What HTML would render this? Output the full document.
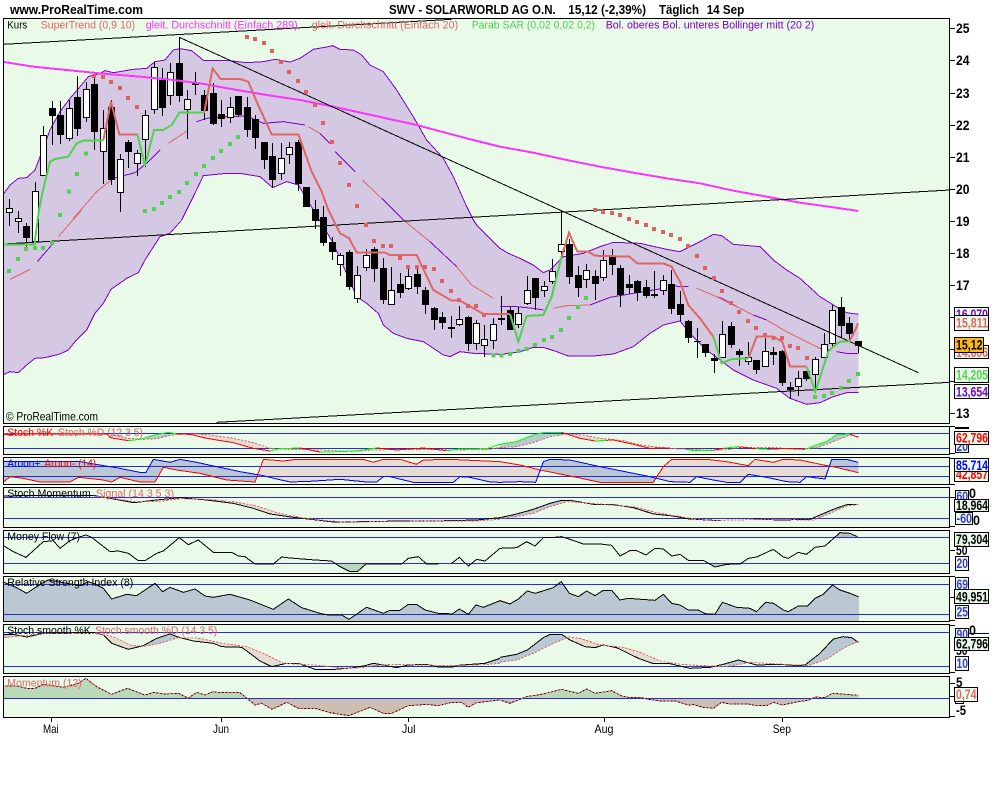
<!DOCTYPE html>
<html>
<head>
<meta charset="utf-8">
<title>SWV - SOLARWORLD AG O.N.</title>
<style>
html,body{margin:0;padding:0;background:#fff;width:1000px;height:800px;overflow:hidden}
svg{position:absolute;left:0;top:0;display:block}
text{font-family:"Liberation Sans",Arial,sans-serif}
.t{font-size:12.5px;font-weight:bold;fill:#000}
.l{font-size:11px}
.a{font-size:13.5px;font-weight:bold;fill:#000}
.v{font-size:13.5px;font-weight:bold}
.m{font-size:12px;fill:#000}
.f{fill:#e9fae9;stroke:#000;stroke-width:1}
.b{fill:#e9fae9;stroke:#000;stroke-width:1}
.sr{fill:none;stroke:#e06666;stroke-width:6}
.sg{fill:none;stroke:#4fd24f;stroke-width:6}
.k{fill:none;stroke:#000;stroke-width:3}
.rd{fill:none;stroke:#f00;stroke-width:3}
.gn{fill:none;stroke:#0f0;stroke-width:3}
.bl{fill:none;stroke:#00f;stroke-width:3}
.ds{fill:none;stroke:#e06666;stroke-width:3;stroke-dasharray:7 4}
.pu{fill:none;stroke:#7f00cc;stroke-width:3}
.tn{fill:#e6dcd2}
.gy{fill:#b9c8d3}
</style>
</head>
<body>
<svg width="1000" height="800" viewBox="0 0 1000 800" xmlns="http://www.w3.org/2000/svg">
<defs>
<clipPath id="up"><rect x="0" y="300" width="1500" height="70"/></clipPath>
<clipPath id="dn"><rect x="0" y="370" width="1500" height="60"/></clipPath>
<clipPath id="main"><rect x="4" y="19" width="945" height="404"/></clipPath>
</defs>

<!-- titles -->
<text class="t" x="10" y="14" textLength="133" lengthAdjust="spacingAndGlyphs">www.ProRealTime.com</text>
<text class="t" x="389" y="14" textLength="166.7" lengthAdjust="spacingAndGlyphs">SWV - SOLARWORLD AG O.N.</text>
<text class="t" x="568.3" y="14" textLength="77.7" lengthAdjust="spacingAndGlyphs">15,12 (-2,39%)</text>
<text class="t" x="659" y="14" textLength="40" lengthAdjust="spacingAndGlyphs">Täglich</text>
<text class="t" x="706.7" y="14" textLength="37.6" lengthAdjust="spacingAndGlyphs">14 Sep</text>

<!-- panels -->
<rect class="f" x="3.5" y="18.5" width="946" height="405"/>
<rect class="f" x="3.5" y="426.5" width="946" height="28"/>
<rect class="f" x="3.5" y="457.5" width="946" height="27"/>
<rect class="f" x="3.5" y="487.5" width="946" height="40"/>
<rect class="f" x="3.5" y="530.5" width="946" height="43"/>
<rect class="f" x="3.5" y="576.5" width="946" height="45"/>
<rect class="f" x="3.5" y="624.5" width="946" height="49"/>
<rect class="f" x="3.5" y="676.5" width="946" height="41"/>

<g clip-path="url(#main)" shape-rendering="crispEdges">
<!-- bollinger band -->
<g transform="scale(.33333)">
<polygon fill="#d4c8e2" points="12,580 30,555 55,535 80,533 105,510 130,445 150,390 180,335 210,295 240,260 265,230 300,220 315,212 340,218 400,208 440,205 465,185 495,180 520,150 540,146 575,152 610,181 680,181 740,188 790,185 825,178 870,186 900,175 940,148 975,142 998,137 1020,148 1060,150 1085,165 1110,195 1150,215 1190,270 1240,350 1280,420 1330,475 1360,530 1400,620 1420,660 1430,675 1490,735 1500,745 1525,760 1560,775 1600,795 1630,818 1650,810 1690,770 1750,760 1800,740 1840,727 1920,730 2000,748 2040,755 2100,725 2140,703 2165,707 2200,733 2280,740 2320,780 2360,810 2400,835 2460,890 2500,915 2540,938 2575,943 2575,1177 2540,1178 2500,1190 2460,1208 2420,1213 2370,1195 2330,1165 2260,1140 2200,1110 2160,1080 2120,1050 2070,1000 2040,963 1990,975 1950,1000 1900,1040 1840,1062 1780,1068 1705,1068 1670,1055 1630,1042 1600,1042 1560,1055 1530,1060 1500,1063 1420,1060 1380,1055 1350,1070 1330,1065 1270,1025 1220,1015 1180,1000 1150,975 1135,940 1100,910 1070,890 1000,730 940,630 895,555 860,545 818,563 780,530 720,520 680,520 610,527 580,590 545,660 540,660 510,700 480,710 435,780 415,818 380,835 333,868 310,910 285,940 260,990 225,1025 205,1050 180,1062 135,1073 105,1075 80,1095 55,1118 30,1115 12,1123"/>
<path class="pu" d="M12 580L30 555 55 535 80 533 105 510 130 445 150 390 180 335 210 295 240 260 265 230 300 220 315 212 340 218 400 208 440 205 465 185 495 180 520 150 540 146 575 152 610 181 680 181 740 188 790 185 825 178 870 186 900 175 940 148 975 142 998 137 1020 148 1060 150 1085 165 1110 195 1150 215 1190 270 1240 350 1280 420 1330 475 1360 530 1400 620 1420 660 1430 675 1490 735 1500 745 1525 760 1560 775 1600 795 1630 818 1650 810 1690 770 1750 760 1800 740 1840 727 1920 730 2000 748 2040 755 2100 725 2140 703 2165 707 2200 733 2280 740 2320 780 2360 810 2400 835 2460 890 2500 915 2540 938 2575 943"/>
<path class="pu" d="M2575 1177L2540 1178 2500 1190 2460 1208 2420 1213 2370 1195 2330 1165 2260 1140 2200 1110 2160 1080 2120 1050 2070 1000 2040 963 1990 975 1950 1000 1900 1040 1840 1062 1780 1068 1705 1068 1670 1055 1630 1042 1600 1042 1560 1055 1530 1060 1500 1063 1420 1060 1380 1055 1350 1070 1330 1065 1270 1025 1220 1015 1180 1000 1150 975 1135 940 1100 910 1070 890 1000 730 940 630 895 555 860 545 818 563 780 530 720 520 680 520 610 527 580 590 545 660 510 700 480 710 435 780 415 818 380 835 333 868 310 910 285 940 260 990 225 1025 205 1050 180 1062 135 1073 105 1075 80 1095 55 1118 30 1115 12 1123"/>
<!-- mid thin lines -->
<path class="pu" d="M220 655L260 610 290 575 340 535 405 518 440 490 480 450M505 430L565 390M590 365L620 355 680 350 740 348 790 370 850 365 915 375M925 380L960 400 990 430M1005 455L1050 500 1065 515M1087 540L1145 595 1210 660 1290 725 1370 800 1415 855 1480 895M30 838L90 808M112 785L155 735M175 710L245 630M1500 920L1550 920 1600 925 1630 930M1660 925L1700 917 1770 915 1830 892 1900 880 1990 865M2010 858L2065 860M2090 865L2150 890 2165 895 2220 925 2260 945 2300 960 2360 995 2420 1025 2460 1045 2490 1050M2510 1055L2540 1060 2575 1060"/>
<path fill="none" stroke="#e06666" stroke-width="3" d="M220 655L260 610 290 575 340 535M505 430L565 390M925 380L960 400M1087 540L1145 595M1210 660L1290 725M1370 800L1415 855 1480 895M30 838L90 808M175 710L245 630M1660 925L1700 917 1770 915M2090 865L2150 890 2220 925 2260 945M2300 960L2360 995 2420 1025 2460 1045"/>
</g>

<!-- candle wicks -->
<path stroke="#000" stroke-width="1" fill="none" d="M9.5 199V226M18.5 211V233M26.5 223V247M35.5 182V242M43.5 126V176M52.5 101V145M60.5 101V144M69.5 100V141M77.5 76V136M86.5 82V122M94.5 73V150M103.5 110V184M111.5 100V185M120.5 154V212M128.5 140V168M137.5 150V176M145.5 110V167M154.5 62V114M162.5 68V116M170.5 63V105M179.5 37V102M187.5 90V139M195.5 72V95M204.5 90V120M213.5 83V125M221.5 100V127M230.5 97V123M238.5 96V117M247.5 97V137M255.5 115V149M264.5 142V169M272.5 143V188M281.5 143V180M289.5 142V164M298.5 140V191M306.5 187V207M315.5 200V229M323.5 206V246M332.5 237V260M340.5 253V276M349.5 250V290M357.5 266V303M366.5 249V271M374.5 247V282M383.5 258V304M391.5 267V305M400.5 273V298M408.5 269V290M417.5 265V294M425.5 287V314M434.5 307V330M442.5 312V329M451.5 316V338M459.5 306V326M468.5 316V351M476.5 320V350M484.5 325V357M493.5 318V349M501.5 296V325M510.5 307V330M518.5 307V328M527.5 276V305M535.5 278V310M544.5 281V297M552.5 259V284M561.5 210V255M569.5 239V284M578.5 266V297M586.5 264V288M595.5 270V300M603.5 250V281M612.5 249V275M620.5 265V307M629.5 275V294M637.5 280V301M646.5 280V298M654.5 271V298M663.5 275V295M671.5 270V314M680.5 291V321M688.5 320V343M697.5 328V358M705.5 344V357M714.5 354V373M722.5 321V357M731.5 322V348M739.5 349V366M748.5 342V365M756.5 360V374M765.5 338V366M773.5 347V365M782.5 350V386M790.5 382V399M798.5 371V396M806.5 371V381M815.5 357V390M824.5 333V357M832.5 305V347M841.5 297V338M849.5 317V342M858.5 341V353"/>
<!-- black bodies -->
<path fill="#000" d="M23 226h7v12h-7zM49 108h7v8h-7zM57 115h7v20h-7zM74 97h7v32h-7zM91 84h7v48h-7zM108 107h7v73h-7zM125 142h7v10h-7zM159 80h7v28h-7zM176 63h7v33h-7zM192 83h7v2h-7zM201 95h7v16h-7zM210 93h7v31h-7zM218 114h7v5h-7zM235 96h7v19h-7zM244 107h7v23h-7zM252 119h7v19h-7zM261 142h7v18h-7zM269 156h7v24h-7zM295 142h7v42h-7zM303 187h7v20h-7zM312 209h7v12h-7zM320 217h7v26h-7zM329 242h7v10h-7zM346 252h7v35h-7zM371 249h7v20h-7zM380 268h7v32h-7zM397 284h7v9h-7zM414 274h7v13h-7zM422 290h7v15h-7zM431 308h7v12h-7zM439 317h7v6h-7zM448 327h7v2h-7zM465 317h7v27h-7zM498 318h7v2h-7zM507 310h7v20h-7zM532 278h7v20h-7zM566 244h7v33h-7zM575 275h7v13h-7zM592 276h7v8h-7zM609 257h7v8h-7zM617 268h7v27h-7zM626 284h7v4h-7zM634 281h7v12h-7zM643 287h7v9h-7zM651 294h7v2h-7zM668 284h7v25h-7zM677 304h7v11h-7zM685 321h7v17h-7zM694 341h7v1h-7zM702 344h7v9h-7zM711 358h7v3h-7zM728 326h7v19h-7zM736 351h7v4h-7zM753 360h7v10h-7zM770 352h7v3h-7zM779 351h7v32h-7zM787 387h7v3h-7zM803 371h7v8h-7zM838 307h7v19h-7zM846 323h7v11h-7zM855 341h7v5h-7z"/>
<!-- white bodies -->
<path fill="#fff" stroke="#000" stroke-width="1" d="M6.5 208.5h6v4h-6zM15.5 218.5h6v3h-6zM32.5 191.5h6v50h-6zM40.5 135.5h6v40h-6zM66.5 108.5h6v30h-6zM83.5 89.5h6v28h-6zM100.5 128.5h6v23h-6zM117.5 159.5h6v33h-6zM134.5 153.5h6v10h-6zM142.5 115.5h6v24h-6zM151.5 67.5h6v42h-6zM167.5 72.5h6v23h-6zM184.5 99.5h6v10h-6zM227.5 107.5h6v10h-6zM278.5 158.5h6v15h-6zM286.5 147.5h6v7h-6zM337.5 255.5h6v9h-6zM354.5 275.5h6v23h-6zM363.5 255.5h6v12h-6zM388.5 290.5h6v14h-6zM405.5 276.5h6v12h-6zM456.5 319.5h6v5h-6zM473.5 323.5h6v20h-6zM481.5 339.5h6v6h-6zM490.5 324.5h6v16h-6zM515.5 313.5h6v11h-6zM524.5 290.5h6v13h-6zM541.5 286.5h6v4h-6zM549.5 271.5h6v10h-6zM558.5 244.5h6v7h-6zM583.5 270.5h6v9h-6zM600.5 260.5h6v17h-6zM660.5 280.5h6v10h-6zM719.5 334.5h6v23h-6zM745.5 357.5h6v4h-6zM762.5 351.5h6v15h-6zM795.5 378.5h6v8h-6zM812.5 359.5h6v15h-6zM821.5 344.5h6v13h-6zM829.5 310.5h6v33h-6z"/>

<g transform="scale(.33333)">
<!-- magenta MA -->
<path fill="none" stroke="#ff33ff" stroke-width="6" d="M12 186L100 200 200 210 300 220 420 230 520 240 600 250 700 268 800 285 900 300 1000 320 1100 342 1250 375 1400 415 1500 440 1600 458 1700 480 1800 500 1900 518 2000 535 2100 550 2200 572 2300 590 2400 608 2500 622 2575 633"/>
<!-- trendlines -->
<path fill="none" stroke="#000" stroke-width="3" d="M10 133L1355 58M538 112L2755 1118M10 732L2850 570M650 1267L2850 1147"/>
<!-- supertrend -->
<path class="sr" d="M310 420L333 305 358 403 412 403M612 340L638 205 662 237 720 237 745 245 770 305 815 403 895 403 935 515 965 575 985 630 1020 700 1048 715 1070 758 1155 758 1170 765 1250 765 1300 870 1355 902 1380 902 1450 942 1530 942M1685 770L1707 698 1732 755 1765 755 1785 767 1888 770 1912 790 1990 790 2015 800 2040 845 2065 915 2100 955 2140 1010M2245 1075L2270 1010 2320 1010 2347 1025 2370 1100 2420 1100M2548 1025L2575 970"/>
<path class="sg" d="M12 733L105 733 105 720 117 630 128 575 150 485 165 477 205 470 230 430 250 422 310 422M412 403L435 497 462 390 490 390 515 375 538 338 612 338M1530 942L1555 1025 1580 948 1630 945 1655 890 1685 770M2140 1010L2165 1090 2195 1077 2245 1075M2420 1100L2446 1175 2485 1055 2500 1040 2520 1025 2548 1025"/>
<!-- SAR dots -->
<path fill="#e06060" d="M735 105h12v12h-12zM759 111h12v12h-12zM786 123h12v12h-12zM810 147h12v12h-12zM837 180h12v12h-12zM861 210h12v12h-12zM888 237h12v12h-12zM912 270h12v12h-12zM939 309h12v12h-12zM963 363h12v12h-12zM990 420h12v12h-12zM1014 483h12v12h-12zM1041 549h12v12h-12zM1065 612h12v12h-12zM1092 669h12v12h-12zM1116 717h12v12h-12zM1143 732h12v12h-12zM1167 732h12v12h-12zM1194 768h12v12h-12zM1218 795h12v12h-12zM1245 795h12v12h-12zM1269 795h12v12h-12zM1296 801h12v12h-12zM1320 837h12v12h-12zM1347 867h12v12h-12zM1371 894h12v12h-12zM1398 912h12v12h-12zM1422 912h12v12h-12zM1446 939h12v12h-12zM276 222h12v12h-12zM303 225h12v12h-12zM327 240h12v12h-12zM354 258h12v12h-12zM378 288h12v12h-12zM405 315h12v12h-12zM1779 624h12v12h-12zM1803 630h12v12h-12zM1830 633h12v12h-12zM1854 639h12v12h-12zM1881 651h12v12h-12zM1905 660h12v12h-12zM1932 669h12v12h-12zM1956 681h12v12h-12zM1983 690h12v12h-12zM2007 699h12v12h-12zM2034 711h12v12h-12zM2058 732h12v12h-12zM2085 762h12v12h-12zM2109 798h12v12h-12zM2136 828h12v12h-12zM2160 867h12v12h-12zM2187 903h12v12h-12zM2211 930h12v12h-12zM2238 957h12v12h-12zM2262 978h12v12h-12zM2289 999h12v12h-12zM2314 1008h12v12h-12zM2340 1008h12v12h-12zM2364 1032h12v12h-12zM2388 1038h12v12h-12zM2415 1068h12v12h-12z"/>
<path fill="#4fd24f" d="M174 639h12v12h-12zM201 569h12v12h-12zM225 516h12v12h-12zM252 455h12v12h-12zM21 807h12v12h-12zM48 771h12v12h-12zM72 741h12v12h-12zM99 738h12v12h-12zM123 738h12v12h-12zM150 723h12v12h-12zM429 627h12v12h-12zM456 621h12v12h-12zM480 603h12v12h-12zM504 585h12v12h-12zM531 570h12v12h-12zM555 543h12v12h-12zM582 516h12v12h-12zM606 492h12v12h-12zM633 468h12v12h-12zM657 447h12v12h-12zM684 426h12v12h-12zM708 405h12v12h-12zM1474 1061h12v12h-12zM1498 1061h12v12h-12zM1524 1056h12v12h-12zM1549 1047h12v12h-12zM1574 1041h12v12h-12zM1599 1029h12v12h-12zM1626 1014h12v12h-12zM1650 1005h12v12h-12zM1677 984h12v12h-12zM1701 948h12v12h-12zM1728 915h12v12h-12zM1752 888h12v12h-12zM2439 1185h12v12h-12zM2466 1182h12v12h-12zM2490 1173h12v12h-12zM2517 1158h12v12h-12zM2541 1137h12v12h-12zM2568 1116h12v12h-12z"/>
</g>
</g>

<!-- main legend -->
<text class="l" x="7.3" y="28.5" fill="#000" textLength="20" lengthAdjust="spacingAndGlyphs">Kurs</text>
<text class="l" x="40.7" y="28.5" fill="#e06666" textLength="94.5" lengthAdjust="spacingAndGlyphs">SuperTrend (0,9 10)</text>
<text class="l" x="145.7" y="28.5" fill="#ff33ff" textLength="152" lengthAdjust="spacingAndGlyphs">gleit. Durchschnitt (Einfach 289)</text>
<text class="l" x="311.7" y="28.5" fill="#e06666" textLength="146.5" lengthAdjust="spacingAndGlyphs">gleit. Durchschnitt (Einfach 20)</text>
<text class="l" x="471.7" y="28.5" fill="#4fd24f" textLength="123.3" lengthAdjust="spacingAndGlyphs">Parab SAR (0,02 0,02 0,2)</text>
<text class="l" x="605.7" y="28.5" fill="#7f00cc" textLength="208.6" lengthAdjust="spacingAndGlyphs">Bol. oberes Bol. unteres Bollinger mitt (20 2)</text>
<text class="m" x="6" y="420.7" textLength="92" lengthAdjust="spacingAndGlyphs">© ProRealTime.com</text>

<g shape-rendering="crispEdges">
<!-- left half subpanels 1-4 -->
<g transform="scale(.33333) translate(0,1260)">
<polygon class="tn" points="320,42 335,54 385,62 420,58 430,58 385,55 340,45"/>
<polygon class="gy" points="430,58 460,46 505,37 530,42 510,46 470,56"/>
<polygon class="tn" points="530,42 570,43 620,55 700,68 760,85 810,93 760,68 700,55 620,43 550,42"/>
<polygon class="gy" points="12,125 240,125 300,135 360,145 420,157 438,157 460,118 510,127 540,118 590,127 650,140 720,155 775,165 765,186 680,180 600,160 530,150 490,142 465,186 420,186 360,172 335,186 310,180 235,172 210,186 120,186 70,175 30,170 12,185"/>
<polygon class="tn" points="775,165 790,118 850,123 890,118 1090,118 1120,127 1150,118 1200,118 1250,133 1270,120 1350,118 1500,125 1500,187 1470,186 1410,172 1380,170 1360,187 1240,187 1170,170 1150,170 1130,186 1100,186 1020,178 930,184 870,186 830,177 790,167"/>
<polygon class="tn" points="700,245 770,258 830,278 880,292 810,282 760,265 700,250"/>
<polygon fill="#b9d9b9" points="1005,430 1020,440 1050,455 1072,455 1098,432"/>
<path stroke="#2b2bd0" stroke-width="3" d="M12 41H1500M12 86H1500M12 139H1500M12 169H1500M12 232H1500M12 295H1500M12 352H1500M12 430H1500"/>
<path class="ds" d="M12 40L300 41 340 45 385 55 430 58 470 56 510 46 550 42 620 43 700 55 760 68 810 85 860 88 900 88 1000 92 1060 94 1120 90 1200 88 1300 88 1360 90 1470 88 1500 82"/>
<path class="rd" d="M12 43L150 42 320 42 335 54 385 62M530 42L570 43 620 55 700 68 760 85 810 93M900 84L960 96M1130 84L1190 90 1270 84 1340 92"/>
<path class="gn" d="M385 62L420 58 460 46 505 37 530 42M810 93L840 86 900 84M960 96L985 96 1060 93 1090 90 1130 84M1340 92L1380 87 1460 86 1500 73"/>
<path class="rd" d="M12 185L30 170 70 175 120 186 210 186 235 172 310 180 335 186 360 172 420 186 465 186 490 142 530 150 600 160 680 180 765 186 790 118 850 123 890 118 1090 118 1120 127 1150 118 1200 118 1250 133 1270 120 1350 118 1500 125"/>
<path class="bl" d="M12 125L240 125 300 135 360 145 420 157 438 157 460 118 510 127 540 118 590 127 650 140 720 155 790 167 830 177 870 186 930 184 1020 178 1100 186 1130 186 1150 170 1170 170 1240 187 1360 187 1380 170 1410 172 1470 186 1500 187"/>
<path class="k" d="M12 228L100 226 280 226 320 233 400 248 470 240 540 233 620 240 700 250 760 265 810 282 880 292 950 300 1000 306 1100 305 1200 303 1300 303 1430 300 1500 293"/>
<path class="ds" d="M280 228L340 235 400 245 470 245 540 236 620 238 700 245 770 258 830 278 900 292 960 300 1040 307 1120 305 1300 303 1430 303 1500 298"/>
<path class="k" d="M12 378L40 395 78 412 130 365 160 362 180 385 210 362 235 352 258 345 275 352 330 395 355 393 385 400 415 422 435 422 470 400 490 393 538 353 565 374 595 360 640 397 695 397 715 408 735 410 765 432 820 432 845 411 870 414 945 420 995 423 1020 440 1050 455 1072 455 1098 432 1205 432 1225 415 1255 410 1280 432 1315 432M1355 430L1378 412 1405 438 1430 418 1455 423 1500 385"/>
</g>

<!-- right half subpanels 1-4 -->
<g transform="scale(.33333) translate(1500,1260)">
<polygon class="gy" points="0,73 50,65 100,45 130,38 185,37 200,42 150,50 100,68 50,80 0,83"/>
<polygon class="tn" points="200,42 240,55 285,63 340,60 400,73 450,85 510,84 480,82 420,75 370,62 300,55 250,45"/>
<polygon class="gy" points="920,88 940,78 980,65 1010,44 1050,42 1075,50 1050,45 1000,65 950,84"/>
<polygon class="tn" points="0,125 60,135 120,150 125,152 107,187 60,185 0,187"/>
<polygon class="gy" points="125,152 130,125 150,118 210,120 300,140 450,170 470,175 460,187 300,187 220,170 170,160"/>
<polygon class="tn" points="470,175 490,140 515,118 620,118 680,125 745,137 765,118 820,127 850,118 900,120 980,137 985,138 975,177 920,170 900,187 860,185 800,172 745,163 720,187 680,187 640,180 590,170 570,187 510,185"/>
<polygon class="gy" points="985,138 995,118 1040,118 1075,127 1075,158 1000,140"/>
<polygon class="gy" points="0,293 50,282 100,268 150,250 185,241 200,245 150,260 100,280 50,290 0,295"/>
<polygon class="gy" points="945,298 960,285 1000,268 1040,254 1075,253 1040,258 990,280"/>
<polygon class="tn" points="400,260 470,278 530,288 520,288 460,282 400,263"/>
<polygon fill="#c3bcbc" points="1005,352 1020,338 1050,340 1072,350"/>
<polygon fill="#b9d9b9" points="630,430 645,441 680,433"/>
<path stroke="#2b2bd0" stroke-width="3" d="M0 41H1348M0 86H1348M0 139H1348M0 169H1348M0 232H1348M0 295H1348M0 352H1348M0 430H1348"/>
<path class="ds" d="M0 83L50 80 100 68 150 50 200 42 250 45 300 55 370 62 420 75 480 82 510 85 560 88 620 90 680 90 720 82 760 83 820 82 880 88 950 84 1000 65 1050 45 1075 50"/>
<path class="rd" d="M185 37L240 55 285 63M320 61L340 60 400 73 450 85 510 84M640 91L670 85M715 80L760 85 770 86M805 88L860 85 915 88M1050 42L1075 52"/>
<path class="gn" d="M0 73L50 65 100 45 130 38 185 37M285 63L320 61M560 88L580 92 640 91M670 85L715 80M770 86L805 88M920 88L940 78 980 65 1010 44 1050 42"/>
<path class="rd" d="M0 125L60 135 120 150 170 160 220 170 300 187 460 187 490 140 515 118 620 118 680 125 745 137 765 118 820 127 850 118 900 120 980 137 1000 140 1075 158"/>
<path class="bl" d="M0 187L60 185 107 187 130 125 150 118 210 120 300 140 450 170 510 185 570 187 590 170 640 180 680 187 720 187 745 163 800 172 860 185 900 187 920 170 975 177 995 118 1040 118 1075 127"/>
<path class="k" d="M0 293L50 282 100 268 150 250 185 241 210 241 280 253 340 254 400 263 460 282 520 288 560 296 620 300 660 302M760 297L840 300 930 298 960 285 1000 268 1040 254 1075 253"/>
<path class="ds" d="M0 295L50 290 100 280 150 260 200 245 250 248 320 254 400 260 470 278 530 288 580 296 640 302 700 300 800 298 940 300 990 280 1040 258 1075 253"/>
<path class="k" d="M0 385L50 383 80 365 105 378 132 352 165 352 185 350 210 358 250 372 300 372 335 376 360 408 390 392 410 392 438 405 465 385 490 387 515 408 540 403 565 421 610 421 645 441 680 433 720 432 745 415 770 411 820 388 850 411 865 415 895 397 920 403 945 382 975 378 1020 338 1050 340 1072 350"/>
</g>

<!-- left half subpanels 5-7 -->
<g transform="scale(.33333) translate(0,1725)">
<polygon class="gy" points="12,22 50,38 80,55 130,22 145,15 240,32 265,20 280,25 310,40 335,72 380,58 410,62 465,25 488,50 510,37 550,52 585,42 615,63 640,67 690,58 750,75 820,103 865,72 905,98 960,115 985,120 1025,120 1047,133 1100,97 1150,115 1170,106 1200,106 1225,88 1250,88 1275,105 1315,115 1340,115 1355,118 1378,102 1405,118 1428,90 1450,97 1500,77 1500,138 12,138"/>
<polygon class="gy" points="12,178 40,178 60,183 12,188"/>
<polygon class="tn" points="310,180 335,205 385,223 430,212 390,210 340,185"/>
<polygon class="gy" points="430,212 470,190 510,177 535,188 480,205 430,215"/>
<polygon class="tn" points="580,198 640,205 665,215 725,217 750,235 780,258 815,275 850,265 790,235 740,215 665,205 600,190"/>
<polygon class="gy" points="1095,272 1120,265 1150,270 1120,272"/>
<polygon class="gy" points="1455,265 1500,250 1500,265"/>
<polygon fill="#b9d9b9" clip-path="url(#up)" points="12,370 12,333 50,333 80,340 105,340 130,328 190,337 235,325 258,310 290,335 335,358 382,340 435,360 463,352 490,357 535,355 565,370 590,352 615,360 640,350 660,353 690,352 720,353 738,370"/>
<polygon fill="#cbbfb2" clip-path="url(#dn)" points="738,370 765,390 785,385 817,403 860,382 895,400 945,400 990,413 1047,422 1110,397 1150,415 1175,415 1225,392 1280,388 1315,392 1355,382 1385,382 1405,397 1430,383 1500,375 1500,370"/>
<path stroke="#2b2bd0" stroke-width="3" d="M12 28H1500M12 118H1500M12 172H1500M12 274H1500M12 370H1500"/>
<path class="k" d="M12 22L50 38 80 55 130 22 145 15 240 32 265 20 280 25 310 40 335 72 380 58 410 62 465 25 488 50 510 37 550 52 585 42 615 63 640 67 690 58 750 75 820 103 865 72 905 98 960 115 985 120 1025 120 1047 133 1100 97 1150 115 1170 106 1200 106 1225 88 1250 88 1275 105 1315 115 1340 115 1355 118 1378 102 1405 118 1428 90 1450 97 1500 77"/>
<path class="k" d="M12 178L40 178 80 186 130 175 280 172 310 180 335 205 385 223 430 212 470 190 510 177 540 188 580 198 640 205 665 215 725 217 750 235 780 258 815 275 855 266 895 265 945 283 1005 283 1060 278 1095 272 1120 265 1150 270 1190 278 1225 270 1280 268 1315 276 1358 276 1375 271 1455 265 1500 250"/>
<path class="ds" d="M12 188L60 183 130 175 280 175 340 185 390 210 430 215 480 205 535 188 600 190 665 205 740 215 790 235 850 265 910 268 965 272 1030 280 1085 278 1120 272 1180 268 1350 272 1440 270 1500 265"/>
<path class="k" d="M12 333L50 333 80 340 105 340 130 328 190 337 235 325 258 310 290 335 335 358 382 340 435 360 463 352 490 357 535 355 565 370 590 352 615 360 640 350 660 353 690 352 720 353 765 390 785 385 817 403 860 382 895 400 945 400 990 413 1047 422 1110 397 1150 415 1175 415 1225 392 1280 388 1315 392 1355 382 1385 382 1405 397 1430 383 1500 375"/>
<path class="ds" d="M12 333L50 333 80 340 105 340 130 328 190 337 235 325 258 310 290 335 335 358 382 340 435 360 463 352 490 357 535 355 565 370 590 352 615 360 640 350 660 353 690 352 720 353 765 390 785 385 817 403 860 382 895 400 945 400 990 413 1047 422 1110 397 1150 415 1175 415 1225 392 1280 388 1315 392 1355 382 1385 382 1405 397 1430 383 1500 375"/>
</g>

<!-- right half subpanels 5-7 -->
<g transform="scale(.33333) translate(1500,1725)">
<polygon class="gy" points="0,77 30,87 55,72 82,48 106,55 160,38 184,20 208,55 235,65 260,48 285,62 310,46 335,46 360,75 385,70 465,76 490,58 515,85 540,90 565,105 595,105 615,116 645,118 667,82 710,97 750,100 770,110 797,82 820,85 850,105 865,110 895,93 922,93 945,70 970,58 997,30 1020,45 1050,55 1077,65 1077,138 0,138"/>
<polygon class="gy" points="0,247 50,238 82,225 130,188 150,178 185,178 205,186 150,210 100,235 50,255 0,262"/>
<polygon class="tn" points="205,186 210,195 255,215 285,218 310,210 350,218 415,250 460,266 480,258 420,232 370,217 300,210 240,190"/>
<polygon class="gy" points="650,270 670,268 715,255 745,262 700,272"/>
<polygon class="gy" points="915,270 960,235 1000,192 1030,185 1055,188 1075,202 1030,220 980,252 925,272"/>
<polygon fill="#b9d9b9" clip-path="url(#up)" points="60,370 80,365 130,357 184,343 235,355 260,342 285,355 335,347 365,363 390,368 425,368 436,370"/>
<polygon fill="#b9d9b9" clip-path="url(#up)" points="940,370 945,366 975,368 997,355 1075,361 1075,370"/>
<polygon fill="#cbbfb2" clip-path="url(#dn)" points="0,370 0,375 30,385 60,370"/>
<polygon fill="#cbbfb2" clip-path="url(#dn)" points="436,370 445,373 480,378 525,378 565,390 580,389 610,397 640,400 665,382 690,387 745,387 770,392 800,392 820,382 847,390 895,380 925,376 940,370"/>
<path stroke="#2b2bd0" stroke-width="3" d="M0 28H1348M0 118H1348M0 172H1348M0 274H1348M0 370H1348"/>
<path class="k" d="M0 77L30 87 55 72 82 48 106 55 160 38 184 20 208 55 235 65 260 48 285 62 310 46 335 46 360 75 385 70 465 76 490 58 515 85 540 90 565 105 595 105 615 116 645 118 667 82 710 97 750 100 770 110 797 82 820 85 850 105 865 110 895 93 922 93 945 70 970 58 997 30 1020 45 1050 55 1075 65"/>
<path class="k" d="M0 247L50 238 82 225 130 188 150 178 185 178 210 195 255 215 285 218 310 210 350 218 415 250 460 266 505 265 570 280 630 277 670 268 715 255 770 270 840 268 890 272 915 270 960 235 1000 192 1030 185 1055 188 1075 202"/>
<path class="ds" d="M0 262L50 255 100 235 150 210 205 186 240 190 300 210 370 217 420 232 480 258 540 268 610 272 680 275 750 262 850 268 925 272 980 252 1030 220 1075 198"/>
<path class="k" d="M0 375L30 385 80 365 130 357 184 343 235 355 260 342 285 355 335 347 365 363 390 368 425 368 445 373 480 378 525 378 565 390 580 389 610 397 640 400 665 382 690 387 745 387 770 392 800 392 820 382 847 390 895 380 925 376 945 366 975 368 997 355 1075 361"/>
<path class="ds" d="M0 375L30 385 80 365 130 357 184 343 235 355 260 342 285 355 335 347 365 363 390 368 425 368 445 373 480 378 525 378 565 390 580 389 610 397 640 400 665 382 690 387 745 387 770 392 800 392 820 382 847 390 895 380 925 376 945 366 975 368 997 355 1075 361"/>
</g>
</g>

<!-- subpanel legends -->
<text class="l" x="7.3" y="436" fill="#f00" textLength="46" lengthAdjust="spacingAndGlyphs">Stoch %K</text>
<text class="l" x="58" y="436" fill="#e06666" textLength="85" lengthAdjust="spacingAndGlyphs">Stoch %D (12 3 5)</text>
<text class="l" x="7.3" y="467" fill="#00f" textLength="33" lengthAdjust="spacingAndGlyphs">Aroon+</text>
<text class="l" x="44.3" y="467" fill="#f00" textLength="31" lengthAdjust="spacingAndGlyphs">Aroon-</text>
<text class="l" x="78.3" y="467" fill="#f00" textLength="18" lengthAdjust="spacingAndGlyphs">(14)</text>
<text class="l" x="7.3" y="497" fill="#000" textLength="83.4" lengthAdjust="spacingAndGlyphs">Stoch Momentum</text>
<text class="l" x="96" y="497" fill="#e06666" textLength="78" lengthAdjust="spacingAndGlyphs">Signal (14 3 5 3)</text>
<text class="l" x="7.3" y="540" fill="#000" textLength="72.7" lengthAdjust="spacingAndGlyphs">Money Flow (7)</text>
<text class="l" x="7.3" y="586" fill="#000" textLength="126" lengthAdjust="spacingAndGlyphs">Relative Strength Index (8)</text>
<text class="l" x="7.3" y="634" fill="#000" textLength="83.4" lengthAdjust="spacingAndGlyphs">Stoch smooth %K</text>
<text class="l" x="95" y="634" fill="#e06666" textLength="122.3" lengthAdjust="spacingAndGlyphs">Stoch smooth %D (14 3 5)</text>
<text class="l" x="7.3" y="686.5" fill="#e06666" textLength="74.4" lengthAdjust="spacingAndGlyphs">Momentum (12)</text>

<!-- frames on top edges -->
<path fill="none" stroke="#000" stroke-width="1" shape-rendering="crispEdges" d="M3.5 18.5H949.5V423.5H3.5ZM3.5 426.5H949.5V454.5H3.5ZM3.5 457.5H949.5V484.5H3.5ZM3.5 487.5H949.5V527.5H3.5ZM3.5 530.5H949.5V573.5H3.5ZM3.5 576.5H949.5V621.5H3.5ZM3.5 624.5H949.5V673.5H3.5ZM3.5 676.5H949.5V717.5H3.5Z"/>

<!-- axis ticks -->
<path stroke="#000" stroke-width="1" shape-rendering="crispEdges" d="M950 28.5h5M950 60.5h5M950 93.5h5M950 125.5h5M950 157.5h5M950 189.5h5M950 221.5h5M950 253.5h5M950 285.5h5M950 317.5h5M950 349.5h5M950 381.5h5M950 413.5h5M950 426.5h5M950 453.5h5M950 458.5h5M950 484.5h5M950 497.5h5M950 526.5h5M950 550.5h5M950 576.5h5M950 597.5h5M950 620.5h5M950 625.5h5M950 672.5h5M950 683.5h5M950 696.5h5M950 716.5h5M51.5 718v4M221.5 718v4M408.5 718v4M604.5 718v4M782.5 718v4"/>

<!-- price axis numbers -->
<text class="a" x="956" y="33" textLength="13.5" lengthAdjust="spacingAndGlyphs">25</text>
<text class="a" x="956" y="65" textLength="13.5" lengthAdjust="spacingAndGlyphs">24</text>
<text class="a" x="956" y="98" textLength="13.5" lengthAdjust="spacingAndGlyphs">23</text>
<text class="a" x="956" y="130" textLength="13.5" lengthAdjust="spacingAndGlyphs">22</text>
<text class="a" x="956" y="162" textLength="13.5" lengthAdjust="spacingAndGlyphs">21</text>
<text class="a" x="956" y="194" textLength="13.5" lengthAdjust="spacingAndGlyphs">20</text>
<text class="a" x="956" y="226" textLength="13.5" lengthAdjust="spacingAndGlyphs">19</text>
<text class="a" x="956" y="258" textLength="13.5" lengthAdjust="spacingAndGlyphs">18</text>
<text class="a" x="956" y="290" textLength="13.5" lengthAdjust="spacingAndGlyphs">17</text>
<text class="a" x="956" y="418" textLength="13.5" lengthAdjust="spacingAndGlyphs">13</text>

<!-- main value boxes -->
<rect class="b" x="954.5" y="307.5" width="34" height="15"/>
<text class="v" x="956" y="319" fill="#7f00cc" textLength="32" lengthAdjust="spacingAndGlyphs">16,070</text>
<rect class="b" x="954.5" y="315.5" width="34" height="15"/>
<text class="v" x="956" y="327.5" fill="#e06666" textLength="32" lengthAdjust="spacingAndGlyphs">15,811</text>
<rect class="b" x="954.5" y="345.5" width="34" height="13"/>
<text class="v" x="956" y="357" fill="#e06666" textLength="32" lengthAdjust="spacingAndGlyphs">14,606</text>
<rect x="954.5" y="337.5" width="29" height="15" fill="#ffb913" stroke="#000"/>
<text class="v" x="956" y="349.5" fill="#000" textLength="26.5" lengthAdjust="spacingAndGlyphs">15,12</text>
<rect class="b" x="954.5" y="367.5" width="34" height="15"/>
<text class="v" x="956" y="379.5" fill="#4fd24f" textLength="32" lengthAdjust="spacingAndGlyphs">14,205</text>
<rect class="b" x="954.5" y="384.5" width="34" height="14"/>
<text class="v" x="956" y="396.5" fill="#7f00cc" textLength="32" lengthAdjust="spacingAndGlyphs">13,654</text>

<!-- P1 labels -->
<rect class="b" x="955.5" y="440.5" width="13" height="12"/>
<text class="v" x="956.5" y="451" fill="#3a3ad0" textLength="11.5" lengthAdjust="spacingAndGlyphs">20</text>
<rect x="955" y="427" width="14" height="2" fill="#000"/>
<rect class="b" x="954.5" y="431.5" width="34" height="13"/>
<text class="v" x="956" y="442.5" fill="#f00" textLength="32" lengthAdjust="spacingAndGlyphs">62,796</text>

<!-- P2 labels -->
<rect class="b" x="954.5" y="468.5" width="34" height="13"/>
<text class="v" x="956" y="479" fill="#f00" textLength="32" lengthAdjust="spacingAndGlyphs">42,857</text>
<rect class="b" x="954.5" y="458.5" width="34" height="13"/>
<text class="v" x="956" y="470" fill="#00f" textLength="32" lengthAdjust="spacingAndGlyphs">85,714</text>

<!-- P3 labels -->
<rect class="b" x="955.5" y="490.5" width="13" height="12"/>
<text class="v" x="956.5" y="501" fill="#3a3ad0" textLength="11.5" lengthAdjust="spacingAndGlyphs">60</text>
<text class="a" x="969" y="498" textLength="7" lengthAdjust="spacingAndGlyphs">0</text>
<rect class="b" x="954.5" y="499.5" width="34" height="12"/>
<text class="v" x="956" y="510" fill="#000" textLength="32" lengthAdjust="spacingAndGlyphs">18,964</text>
<text class="a" x="973" y="525" textLength="7" lengthAdjust="spacingAndGlyphs">0</text>
<rect class="b" x="955.5" y="512.5" width="17" height="12"/>
<text class="v" x="956.5" y="523" fill="#3a3ad0" textLength="15.5" lengthAdjust="spacingAndGlyphs">-60</text>

<!-- P4 labels -->
<rect class="b" x="954.5" y="532.5" width="34" height="14"/>
<text class="v" x="956" y="544" fill="#000" textLength="32" lengthAdjust="spacingAndGlyphs">79,304</text>
<text class="a" x="956" y="555" textLength="11.5" lengthAdjust="spacingAndGlyphs">50</text>
<rect class="b" x="955.5" y="556.5" width="13" height="14"/>
<text class="v" x="956.5" y="568" fill="#3a3ad0" textLength="11.5" lengthAdjust="spacingAndGlyphs">20</text>

<!-- P5 labels -->
<rect class="b" x="955.5" y="577.5" width="13" height="13"/>
<text class="v" x="956.5" y="589" fill="#3a3ad0" textLength="11.5" lengthAdjust="spacingAndGlyphs">69</text>
<rect class="b" x="954.5" y="589.5" width="34" height="14"/>
<text class="v" x="956" y="601.5" fill="#000" textLength="32" lengthAdjust="spacingAndGlyphs">49,951</text>
<rect class="b" x="955.5" y="605.5" width="13" height="13"/>
<text class="v" x="956.5" y="616.5" fill="#3a3ad0" textLength="11.5" lengthAdjust="spacingAndGlyphs">25</text>

<!-- P6 labels -->
<rect class="b" x="955.5" y="628.5" width="13" height="11"/>
<text class="v" x="956.5" y="639" fill="#3a3ad0" textLength="11.5" lengthAdjust="spacingAndGlyphs">90</text>
<text class="a" x="969" y="635" textLength="7" lengthAdjust="spacingAndGlyphs">0</text>
<path stroke="#000" shape-rendering="crispEdges" d="M968 633.5h21"/>
<text class="a" x="956" y="655" textLength="11.5" lengthAdjust="spacingAndGlyphs">50</text>
<rect class="b" x="954.5" y="637.5" width="34" height="13"/>
<text class="v" x="956" y="648.5" fill="#000" textLength="32" lengthAdjust="spacingAndGlyphs">62,796</text>
<rect class="b" x="955.5" y="656.5" width="13" height="14"/>
<text class="v" x="956.5" y="668" fill="#3a3ad0" textLength="11.5" lengthAdjust="spacingAndGlyphs">10</text>

<!-- P7 labels -->
<text class="a" x="956" y="687" textLength="6.5" lengthAdjust="spacingAndGlyphs">5</text>
<rect class="b" x="955.5" y="697.5" width="8" height="6"/>
<rect class="b" x="954.5" y="687.5" width="23" height="14"/>
<text class="v" x="956" y="699" fill="#e06666" textLength="20.5" lengthAdjust="spacingAndGlyphs">0,74</text>
<text class="a" x="956" y="715" textLength="10" lengthAdjust="spacingAndGlyphs">-5</text>

<!-- months -->
<text class="m" x="43" y="733" textLength="15.7" lengthAdjust="spacingAndGlyphs">Mai</text>
<text class="m" x="213" y="733" textLength="16" lengthAdjust="spacingAndGlyphs">Jun</text>
<text class="m" x="402" y="733" textLength="13.5" lengthAdjust="spacingAndGlyphs">Jul</text>
<text class="m" x="594.5" y="733" textLength="19" lengthAdjust="spacingAndGlyphs">Aug</text>
<text class="m" x="772.7" y="733" textLength="18.3" lengthAdjust="spacingAndGlyphs">Sep</text>
</svg>
</body>
</html>
